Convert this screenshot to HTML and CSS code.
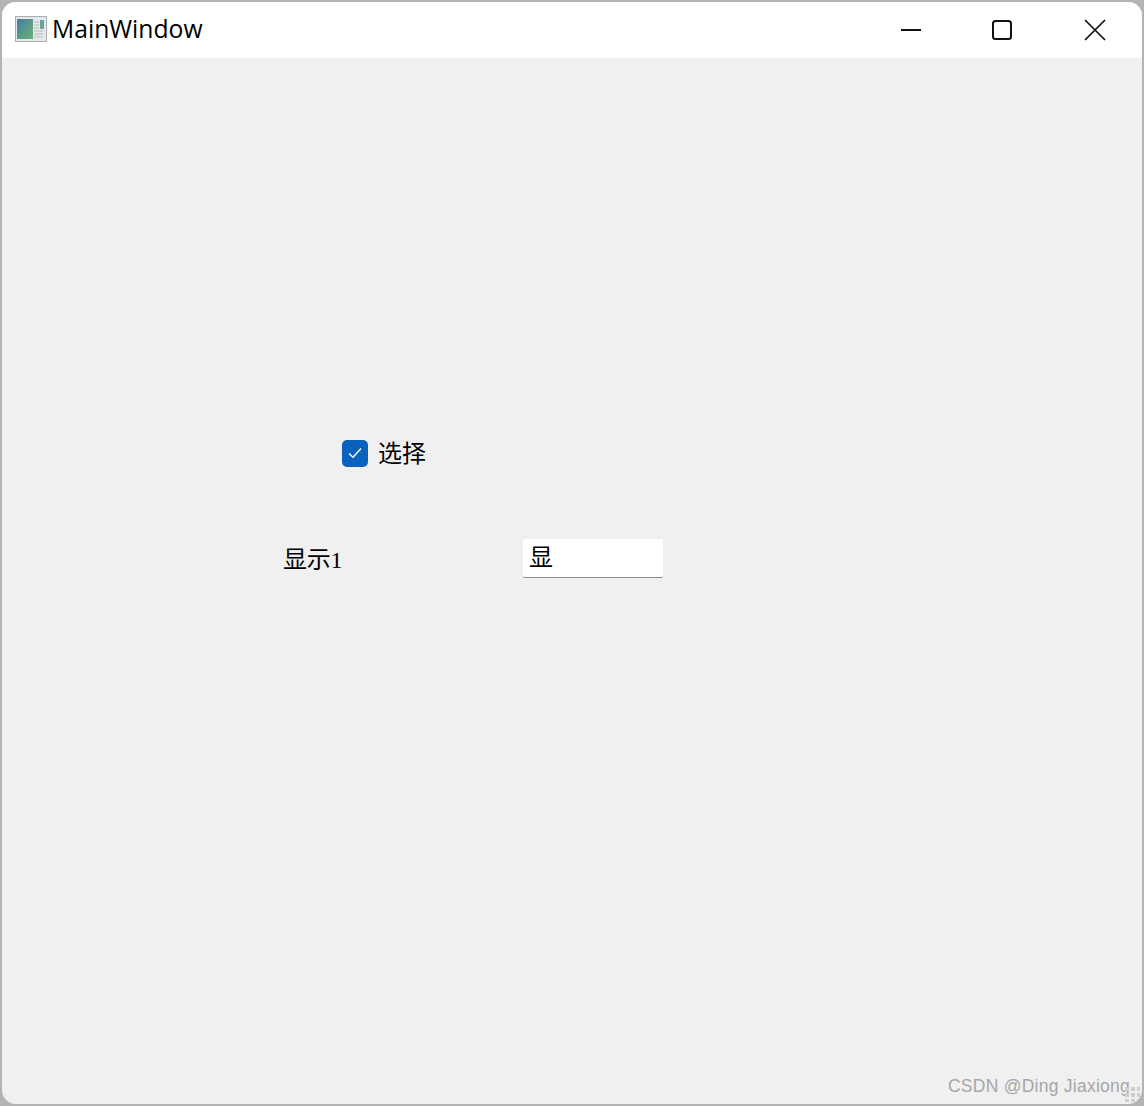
FILE: index.html
```html
<!DOCTYPE html>
<html lang="zh">
<head>
<meta charset="utf-8">
<title>MainWindow</title>
<link rel="stylesheet" href="styles.css">
</head>
<body>
<div class="window">
  <header class="titlebar">
    <svg class="app-icon" width="32" height="26" viewBox="0 0 32 26">
      <defs>
        <linearGradient id="pane" x1="0" y1="0" x2="1" y2="1">
          <stop offset="0" stop-color="#3f7fa8"/>
          <stop offset="1" stop-color="#6fb070"/>
        </linearGradient>
        <linearGradient id="side" x1="0" y1="0" x2="0" y2="1">
          <stop offset="0" stop-color="#5f9fb8"/>
          <stop offset="1" stop-color="#70ad80"/>
        </linearGradient>
      </defs>
      <rect x="0.5" y="0.5" width="31" height="25" fill="#e6e9ec" stroke="#a9afb5"/>
      <rect x="2" y="3" width="16" height="20" fill="url(#pane)"/>
      <rect x="25" y="4" width="4" height="9" fill="url(#side)"/>
      <path d="M19 6h5M19 9h5M19 12h5M19 15h9M19 18h9M19 21h9" stroke="#b4babf" stroke-width="1"/>
    </svg>
    <span class="title">MainWindow</span>
    <div class="controls">
      <svg class="ctl ctl-min" width="20" height="20" viewBox="0 0 20 20"><path d="M0 10h20" stroke="#111" stroke-width="2"/></svg>
      <svg class="ctl ctl-max" width="20" height="20" viewBox="0 0 20 20"><rect x="1" y="1" width="18" height="18" rx="2.5" fill="none" stroke="#111" stroke-width="2"/></svg>
      <svg class="ctl ctl-close" width="22" height="22" viewBox="0 0 22 22"><path d="M1 1l20 20M21 1L1 21" stroke="#111" stroke-width="1.7"/></svg>
    </div>
  </header>
  <main class="client">
    <label class="check-row">
      <span class="checkbox">
        <svg width="14" height="12" viewBox="0 0 14 12"><path d="M1 6.5l4 3.8 8-8.8" fill="none" stroke="#fff" stroke-width="1.4"/></svg>
      </span>
      <span class="text">选择</span>
    </label>
    <div class="field-row">
      <span class="text field-label">显示1</span>
      <div class="lineedit"><span class="text">显</span></div>
    </div>
    <div class="watermark">CSDN @Ding Jiaxiong<span class="grip"></span></div>
  </main>
</div>
</body>
</html>
```
FILE: styles.css
```css
* { box-sizing: border-box; }
html, body { margin: 0; height: 100%; background: #b4b4b4; overflow: hidden; }
.window {
  height: 1106px;
  border: 2px solid #b3b3b3;
  border-radius: 16px;
  overflow: hidden;
  background: #f0f0f0;
  display: flex;
  flex-direction: column;
  position: relative;
}
.titlebar {
  height: 56px;
  flex: none;
  background: #fff;
  display: flex;
  align-items: center;
  padding-left: 13px;
}
.app-icon { flex: none; margin-bottom: 2px; }
.title {
  font: 24.7px/32px "Open Sans", "Noto Sans", sans-serif;
  color: #000;
  margin-left: 5px;
  margin-bottom: 2px;
}
.controls {
  margin-left: auto;
  display: flex;
  align-items: center;
  padding-right: 36px;
  margin-bottom: 1px;
}
.ctl { display: block; }
.ctl-max { margin-left: 71px; }
.ctl-close { margin-left: 72px; }
.client {
  flex: 1;
  position: relative;
  padding: 380px 0 0 281px;
}
.text {
  font: 24px/32px "Liberation Serif", "Noto Sans CJK SC", serif;
  color: #000;
}
.check-row {
  display: flex;
  align-items: center;
  gap: 10px;
  margin-left: 59px;
  height: 32px;
}
.checkbox {
  width: 26px;
  height: 27px;
  margin-top: -2px;
  border-radius: 5px;
  background: #0a62bd;
  display: flex;
  align-items: center;
  justify-content: center;
}
.field-row {
  display: flex;
  align-items: center;
  margin-top: 68px;
  height: 40px;
}
.field-label { width: 239px; margin-top: 4px; letter-spacing: -0.3px; }
.lineedit {
  width: 140px;
  height: 39px;
  margin-left: 1px;
  background: #fff;
  border-bottom: 1px solid #8a8a8a;
  border-radius: 2px;
  padding-left: 6px;
  display: flex;
  align-items: center;
}
.watermark {
  position: absolute;
  right: 12px;
  bottom: 7px;
  font: 17.5px/22px "Liberation Sans", sans-serif;
  color: #a6a6a6;
  letter-spacing: 0.25px;
}
.grip {
  position: absolute;
  right: -10px;
  bottom: -5px;
  width: 15px;
  height: 15px;
  background: conic-gradient(at 4px 4px, transparent 75%, #cdcdcd 75%) 0 0 / 6px 6px;
}
```
